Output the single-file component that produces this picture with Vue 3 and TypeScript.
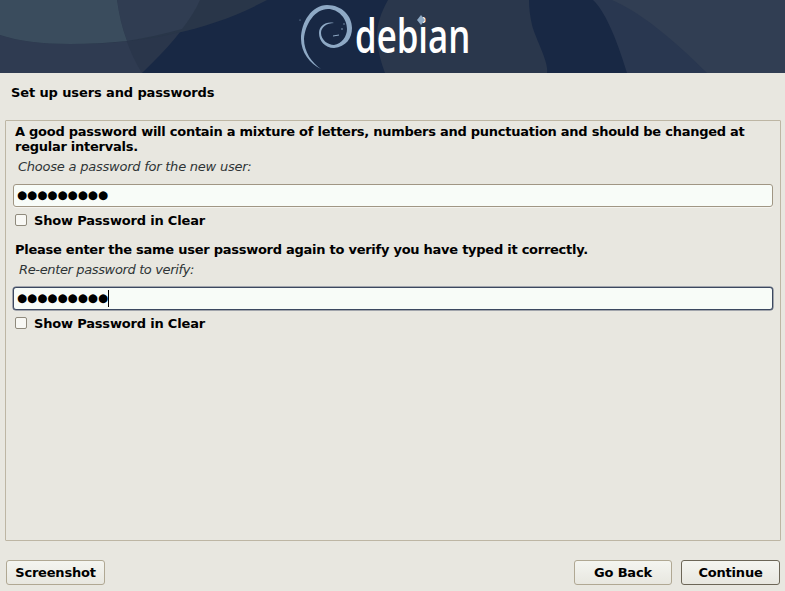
<script setup lang="ts">
const dots = '●●●●●●●●●'
</script>

<template>
  <div class="installer">
    <header class="banner">
      <svg class="art" width="785" height="73" viewBox="0 0 785 73" aria-hidden="true">
        <rect width="785" height="73" fill="#182844" />
        <path d="M0 0H200C188 26 166 50 142 73H0Z" fill="#2a364b" />
        <path d="M0 0H117C120 26 129 52 142 73H0Z" fill="#2f3b51" />
        <path d="M0 0H267C215 28 150 44 70 44C42 44 18 41 0 35Z" fill="#293649" />
        <path d="M117 0H200C195 11 189 20 182 29C164 34 146 38 127 41C122 28 119 14 117 0Z" fill="#303d52" />
        <path d="M0 0H117C119 14 122 28 127 41C108 43 90 44 70 44C42 44 18 41 0 35Z" fill="#3a4c5d" />
        <path d="M388 0C380 14 376 28 377 40C378 52 381 62 385 73H547C549 62 536 40 532 25C530 16 529 8 529 0Z" fill="#2a374c" />
        <path d="M593 0C604 10 616 36 627 73H785V0Z" fill="#293750" />
        <path d="M612 0C640 12 672 38 707 73H785V0Z" fill="#313e53" />
        <path fill="#8ea9c5" d="M321 69C310 64 301 52 301 39C301 22 312 5 327 5C342 5 352 16 352 28C352 38 346 47 334 48C325 48 319 41 319 33C319 26 326 21 334 23C327 23 321 27 321 33C321 40 328 45 334 45C342 44 347 36 347 29C347 18 338 9 328 9C315 9 305 24 304 39C304 52 312 63 321 69Z" />
        <path d="M333 36L339 35" stroke="#8ea9c5" stroke-width="1" fill="none" />
        <circle cx="342" cy="29" r=".8" fill="#8ea9c5" />
        <circle cx="344" cy="24" r=".7" fill="#8ea9c5" />
        <circle cx="300" cy="20" r=".6" fill="#8ea9c5" />
      </svg>
      <div class="logo-text">
        <span class="wordmark">debian</span>
        <svg class="diamond" width="8" height="10" viewBox="0 0 8 10" aria-hidden="true">
          <path d="M4 0L8 5L4 10L0 5Z" fill="#8ea9c5" />
        </svg>
      </div>
    </header>

    <h1 class="title">Set up users and passwords</h1>

    <main class="panel">
      <p class="strong">A good password will contain a mixture of letters, numbers and punctuation and should be changed at regular intervals.</p>
      <label class="field-label first">Choose a password for the new user:</label>
      <div class="entry"><span class="dots">{{ dots }}</span></div>
      <label class="check"><span class="box"></span>Show Password in Clear</label>

      <p class="strong second">Please enter the same user password again to verify you have typed it correctly.</p>
      <label class="field-label verify">Re-enter password to verify:</label>
      <div class="entry focused"><span class="dots">{{ dots }}</span><span class="caret"></span></div>
      <label class="check"><span class="box"></span>Show Password in Clear</label>
    </main>

    <footer class="actions">
      <button class="btn shot" type="button">Screenshot</button>
      <div class="right">
        <button class="btn back" type="button">Go Back</button>
        <button class="btn next" type="button">Continue</button>
      </div>
    </footer>
  </div>
</template>

<style>
html, body { margin: 0; padding: 0; background: #e8e7e0; overflow: hidden; }
</style>

<style scoped>
.installer {
  width: 785px;
  height: 591px;
  display: flex;
  flex-direction: column;
  background: #e8e7e0;
  color: #000;
  font-family: "DejaVu Sans", sans-serif;
  font-size: 13px;
  line-height: 15px;
}
.banner {
  position: relative;
  height: 73px;
  flex: none;
  overflow: hidden;
}
.art { display: block; }
.logo-text {
  position: absolute;
  left: 355px;
  top: 0;
  width: 118px;
  height: 73px;
}
.wordmark {
  position: absolute;
  left: 0;
  top: 3px;
  color: #fff;
  font-family: "Open Sans", sans-serif;
  font-weight: 600;
  font-size: 47px;
  line-height: 64px;
  transform: scaleX(.74);
  transform-origin: left top;
}
.diamond {
  position: absolute;
  left: 62px;
  top: 15px;
}
.title {
  margin: 0;
  padding: 12px 11px 0;
  height: 35px;
  box-sizing: border-box;
  flex: none;
  font-size: 13px;
  line-height: 15px;
  font-weight: bold;
  letter-spacing: -.115px;
}
.panel {
  flex: none;
  height: 421px;
  margin: 12px 4px 0 5px;
  padding: 3px 7px 0 7px;
  box-sizing: border-box;
  border: 1px solid #bdb6a4;
  border-radius: 1px;
}
.strong {
  margin: 0 0 0 2px;
  font-weight: bold;
  letter-spacing: -.26px;
}
.strong.second { margin-top: 14px; }
.field-label {
  display: block;
  font-style: italic;
  color: #2e3436;
}
.first { margin: 5px 0 10px 5px; letter-spacing: -.23px; }
.verify { margin: 5px 0 10px 6px; letter-spacing: -.36px; }
.entry {
  height: 23px;
  box-sizing: border-box;
  display: flex;
  align-items: center;
  padding-left: 3px;
  background: #f8fcf8;
  border: 1px solid #a09684;
  border-radius: 3px;
  box-shadow: 0 1px 0 #f4f3ee;
}
.entry.focused {
  border-color: #3c4860;
  box-shadow: 0 0 0 .5px #5a6478;
}
.dots { font-size: 11.6px; line-height: 15px; }
.caret {
  width: 1px;
  height: 17px;
  background: #000;
}
.check {
  display: flex;
  align-items: center;
  gap: 7px;
  margin: 5px 0 0 2px;
  height: 16px;
  font-weight: bold;
  letter-spacing: -.18px;
}
.box {
  width: 12px;
  height: 12px;
  box-sizing: border-box;
  background: #f8f8f4;
  border: 1px solid #8f8a7c;
  border-radius: 2px;
}
.actions {
  flex: 1;
  display: flex;
  justify-content: space-between;
  align-items: flex-start;
  padding: 19px 5px 0 6px;
}
.right { display: flex; gap: 9px; }
.btn {
  height: 25px;
  padding: 0;
  font: bold 13px/15px "DejaVu Sans", sans-serif;
  letter-spacing: -.2px;
  color: #000;
  background: linear-gradient(#f4f5f0, #e8e7e0);
  border: 1px solid #b0a893;
  border-radius: 3px;
}
.shot { width: 99px; }
.back { width: 98px; }
.next { width: 99px; border-color: #6c6657; }
</style>
